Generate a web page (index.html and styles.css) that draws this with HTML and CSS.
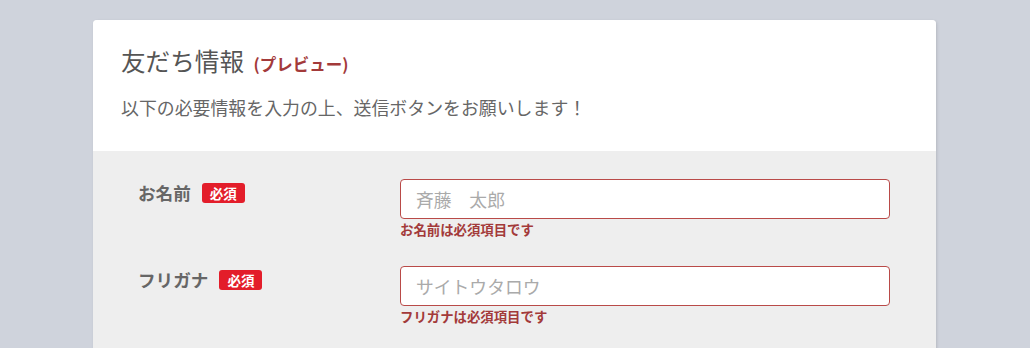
FILE: index.html
```html
<!DOCTYPE html>
<html lang="ja">
<head>
    <meta charset="UTF-8">
    <meta name="viewport" content="width=device-width, initial-scale=1.0">
    <title>友だち情報</title>
    <link rel="stylesheet" href="styles.css">
</head>
<body>
    <div class="card">
        <div class="card-header">
            <h1>友だち情報 <span class="preview">(プレビュー)</span></h1>
            <p class="lead">以下の必要情報を入力の上、送信ボタンをお願いします！</p>
        </div>
        <div class="card-body">
            <div class="field">
                <div class="label">お名前 <span class="required">必須</span></div>
                <div class="control">
                    <input type="text" class="input" placeholder="斉藤　太郎">
                    <p class="error">お名前は必須項目です</p>
                </div>
            </div>
            <div class="field">
                <div class="label">フリガナ <span class="required">必須</span></div>
                <div class="control">
                    <input type="text" class="input" placeholder="サイトウタロウ">
                    <p class="error">フリガナは必須項目です</p>
                </div>
            </div>
        </div>
    </div>
</body>
</html>
```

FILE: styles.css
```css
body {
    margin: 0;
    padding: 20px 0 0;
    background-color: #cfd3dc;
    font-family: "Noto Sans CJK JP", "Noto Sans", sans-serif;
    color: #555;
}
.card {
    width: 843px;
    margin-left: 93px;
    background-color: #eeeeee;
    border-radius: 4px 4px 0 0;
    box-shadow: 1px 1px 3px rgba(0, 0, 0, 0.12);
    overflow: hidden;
    height: 340px;
}
.card-header {
    background-color: #fff;
    padding: 22px 28px 0;
    height: 109px;
}
h1 {
    margin: 0;
    font-size: 24.6px;
    font-weight: normal;
    line-height: 36px;
    color: #555;
}
.preview {
    margin-left: 4px;
    font-size: 16.5px;
    font-weight: bold;
    color: #a33a3a;
}
.lead {
    margin: 12px 0 0;
    font-size: 17.9px;
    line-height: 26px;
    color: #666;
}
.card-body {
    padding: 28px 46px 0 45px;
}
.field {
    display: flex;
    margin-bottom: 28px;
}
.label {
    width: 262px;
    flex-shrink: 0;
    font-size: 17.6px;
    font-weight: bold;
    color: #666;
    line-height: 28px;
    display: flex;
    align-items: center;
    gap: 11px;
    height: 28px;
}
.required {
    display: inline-block;
    background-color: #e31d2a;
    color: #fff;
    font-size: 13.5px;
    font-weight: bold;
    line-height: 20px;
    padding: 0 8px;
    border-radius: 3px;
}
.control {
    flex: 1;
}
.input {
    box-sizing: border-box;
    width: 100%;
    height: 40px;
    padding: 0 15px;
    border: 1px solid #b94a48;
    border-radius: 4px;
    font-family: inherit;
    font-size: 17.8px;
    color: #555;
    background-color: #fff;
}
.input::placeholder {
    color: #aaa;
}
.error {
    margin: 1px 0 0;
    font-size: 13.4px;
    font-weight: bold;
    line-height: 18px;
    color: #a33a3a;
}
```
